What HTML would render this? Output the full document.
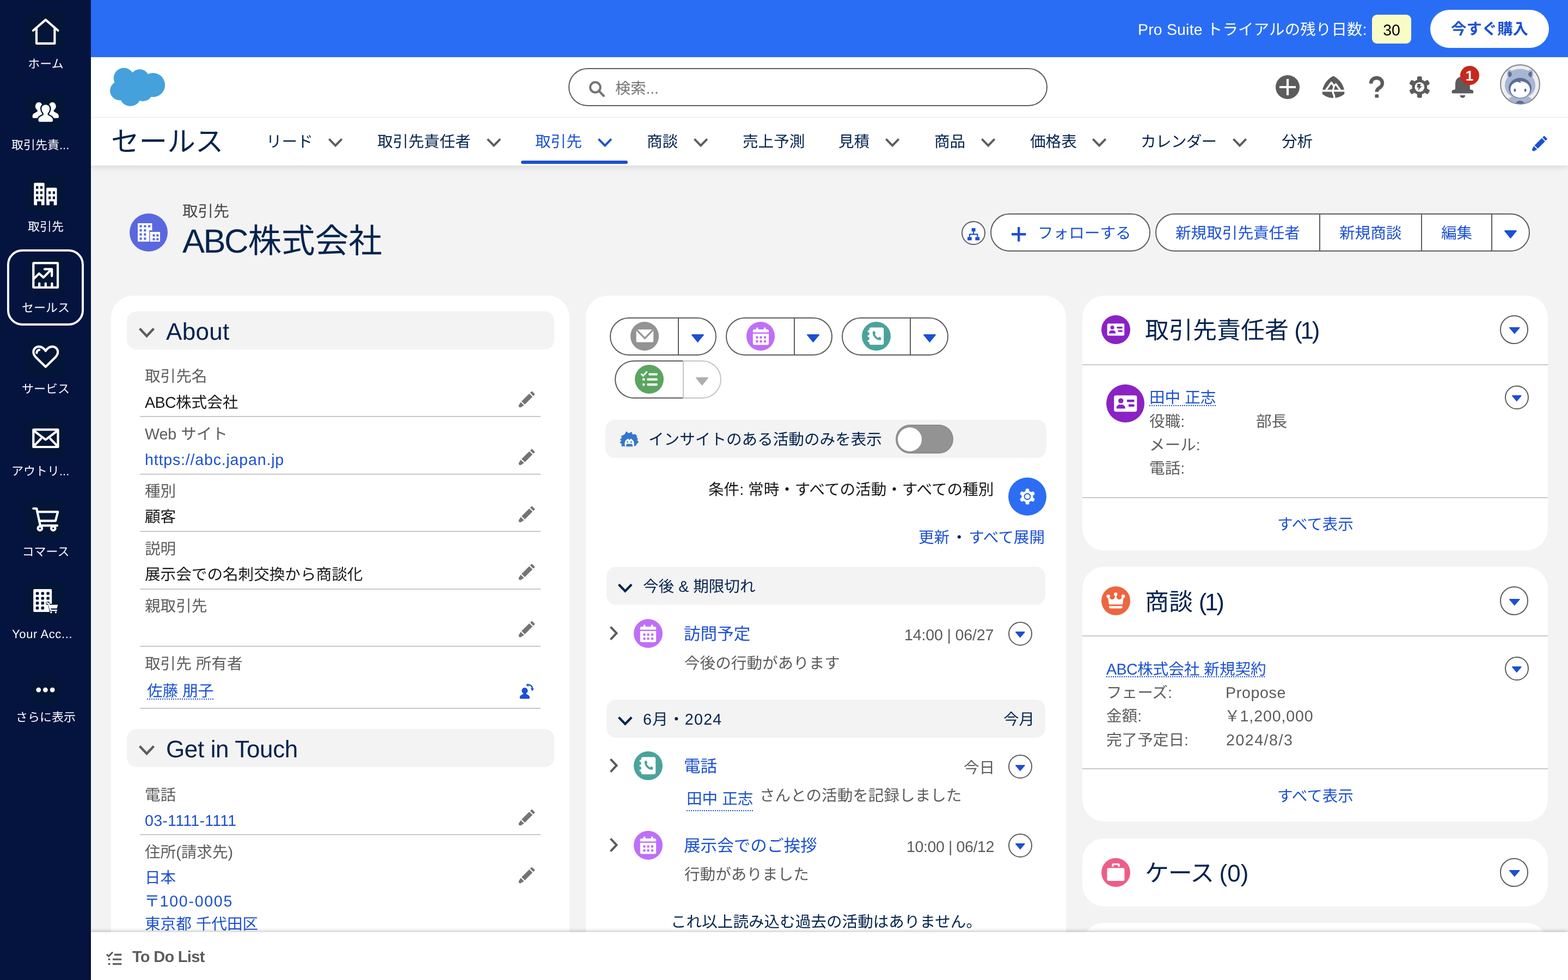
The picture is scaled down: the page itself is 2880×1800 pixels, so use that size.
<!DOCTYPE html>
<html lang="ja">
<head>
<meta charset="utf-8">
<title>ABC株式会社 | 取引先 | Salesforce</title>
<style>
*{margin:0;padding:0;box-sizing:content-box}
html,body{width:2880px;height:1800px;overflow:hidden;background:#f3f3f3}
body{position:relative;text-rendering:geometricPrecision;font-family:"Liberation Sans","Noto Sans CJK JP",sans-serif;color:#181818;-webkit-font-smoothing:antialiased}
.t,.b,.i{position:absolute;display:block}
.t{white-space:nowrap;text-decoration:none;will-change:transform}
.i{overflow:visible}
a{color:inherit;text-decoration:none}
h1,h2,h3,p,ul,li{margin:0;padding:0;font-weight:400;list-style:none}
@media (max-width:1800px){html{width:1440px;height:900px}body{transform:scale(.5);transform-origin:0 0}}
.lk{border-bottom:2.4px dotted #1c50d2}
</style>
</head>
<body>
<main>
<section class="page-header">
<div class="b" style="left:237.8px;top:391.8px;width:70.4px;height:70.4px;background:#5a68e0;border-radius:50%;"></div><svg class="i" style="left:237.8px;top:391.8px;" width="70.4" height="70.4" viewBox="0 0 70.4 70.4"><g fill="#fff"><rect x="15" y="18" width="26.4" height="33.8" rx="0.8"/><rect x="37.4" y="34" width="18.6" height="17.8" rx="0.8"/></g><rect x="36" y="32.6" width="7" height="20" fill="#5a68e0" opacity="0"/><path d="M41.4 30.2 V51.8 H37.2 V30.2 Z" fill="#fff"/><path d="M36.2 31 H41.8 V34 H37.6 V52 H36.2 Z" fill="#5a68e0"/><g fill="#5a68e0"><rect x="18.4" y="21.4" width="4.2" height="4.2" rx="1.2"/><rect x="26.2" y="21.4" width="4.2" height="4.2" rx="1.2"/><rect x="34" y="21.4" width="4.2" height="4.2" rx="1.2"/><rect x="18.4" y="29" width="4.2" height="4.2" rx="1.2"/><rect x="26.2" y="29" width="4.2" height="4.2" rx="1.2"/><rect x="18.4" y="36.6" width="4.2" height="4.2" rx="1.2"/><rect x="26.2" y="36.6" width="4.2" height="4.2" rx="1.2"/><rect x="18.4" y="44.2" width="4.2" height="4.2" rx="1.2"/><rect x="26.2" y="44.2" width="4.2" height="4.2" rx="1.2"/><rect x="42.4" y="38.2" width="4.2" height="4.2" rx="1.2"/><rect x="49.2" y="38.2" width="4.2" height="4.2" rx="1.2"/><rect x="42.4" y="45.2" width="4.2" height="4.2" rx="1.2"/><rect x="49.2" y="45.2" width="4.2" height="4.2" rx="1.2"/></g></svg>
<span class="t" style="left:335px;top:369.173px;font-size:28.6px;line-height:40px;color:#444444;">取引先</span>
<h1 class="t" style="left:335px;top:401.357px;font-size:61.6px;line-height:86px;color:#03234d;font-weight:400;"><span style="letter-spacing:-2.6px;margin-right:1.6px">ABC</span>株式会社</h1>
<div class="b" style="left:1765.8px;top:406.0px;width:44px;height:44px;background:#fff;border-radius:50%;border:2.2px solid #5c5c5c;box-sizing:border-box;"></div>
<svg class="i" style="left:1776.8px;top:418.8px;" width="22.2" height="22.4" viewBox="0 0 22.2 22.4"><g fill="#1c50d2"><rect x="7.6" y="0" width="7" height="6.2"/><rect x="0" y="16.4" width="7.8" height="6"/><rect x="14.4" y="16.4" width="7.8" height="6"/><path d="M10 6 H12.2 V10.2 H19.4 V16.6 H17.2 V12.4 H5 V16.6 H2.8 V10.2 H10 Z"/></g></svg>
<a class="b" style="left:1819.4px;top:392px;width:293.4px;height:70.2px;background:#fff;border-radius:36px;border:2.2px solid #5c5c5c;box-sizing:border-box;"></a>
<svg class="i" style="left:1858.4px;top:417.4px;" width="26.4" height="26.4" viewBox="0 0 26.4 26.4"><path d="M13.2 0 V26.4 M0 13.2 H26.4" stroke="#1c50d2" stroke-width="4.4" fill="none"/></svg>
<span class="t" style="left:1906.4px;top:409.373px;font-size:28.6px;line-height:40px;color:#1c50d2;">フォローする</span>
<div class="b" style="left:2122.3px;top:392px;width:687.4px;height:70.2px;background:#fff;border-radius:36px;border:2.2px solid #5c5c5c;box-sizing:border-box;"></div>
<div class="b" style="left:2422.6px;top:392px;width:2.2px;height:70.2px;background:#5c5c5c;"></div>
<div class="b" style="left:2610.1px;top:392px;width:2.2px;height:70.2px;background:#5c5c5c;"></div>
<div class="b" style="left:2738.9px;top:392px;width:2.2px;height:70.2px;background:#5c5c5c;"></div>
<a class="t" style="left:2159px;top:409.373px;font-size:28.6px;line-height:40px;color:#1c50d2;">新規取引先責任者</a>
<a class="t" style="left:2460px;top:409.373px;font-size:28.6px;line-height:40px;color:#1c50d2;">新規商談</a>
<a class="t" style="left:2647px;top:409.373px;font-size:28.6px;line-height:40px;color:#1c50d2;">編集</a>
<svg class="i" style="left:2761.1px;top:421.0px;" width="27" height="18.8" viewBox="0 0 27 18.8"><path d="M2.9 2.9 H24.1 L13.5 16 Z" fill="#1c50d2" stroke="#1c50d2" stroke-width="1.8" stroke-linejoin="round"/></svg>
</section>
<article class="card details">
<div class="b" style="left:204px;top:543px;width:842px;height:1300px;background:#fff;border-radius:40px;"></div>
<div class="b" style="left:233px;top:572px;width:785px;height:70px;background:#f3f3f3;border-radius:18px;"></div>
<svg class="i" style="left:252.10000000000002px;top:599.3px;" width="35" height="23.4" viewBox="0 0 35 23.4"><path d="M4.54 4.54 L17.5 18.2 L30.46 4.54" fill="none" stroke="#5c5c5c" stroke-width="4.4"/></svg>
<h2 class="t" style="left:305px;top:578.512px;font-size:44px;line-height:62px;color:#03234d;font-weight:400;letter-spacing:0.3px;">About</h2>
<div class="field">
<span class="t" style="left:266px;top:672.373px;font-size:28.6px;line-height:40px;color:#5c5c5c;">取引先名</span>
<span class="t" style="left:266px;top:719.773px;font-size:28.6px;line-height:40px;color:#181818;"><span style="letter-spacing:-0.6px">ABC</span>株式会社</span>
<svg class="i" style="left:951.4px;top:718.8000000000001px;" width="31" height="31" viewBox="0 0 30 30"><g fill="#747474" transform="rotate(45 15 15)"><rect x="10.9" y="-3.2" width="8.2" height="4.4" rx="1.3"/><rect x="10.9" y="3.2" width="8.2" height="19.4"/><path d="M10.9 24.6 H19.1 L17.4 31.8 L15 33 L12.6 31.8 Z"/></g></svg>
<div class="b" style="left:257px;top:763.5px;width:736px;height:2.2px;background:#c9c9c9;"></div>
</div>
<div class="field">
<span class="t" style="left:266px;top:777.973px;font-size:28.6px;line-height:40px;color:#5c5c5c;">Web サイト</span>
<a class="t" style="left:266px;top:825.373px;font-size:28.6px;line-height:40px;color:#1c50d2;"><span style="letter-spacing:0.8px">https://abc.japan.jp</span></a>
<svg class="i" style="left:951.4px;top:825.2px;" width="31" height="31" viewBox="0 0 30 30"><g fill="#747474" transform="rotate(45 15 15)"><rect x="10.9" y="-3.2" width="8.2" height="4.4" rx="1.3"/><rect x="10.9" y="3.2" width="8.2" height="19.4"/><path d="M10.9 24.6 H19.1 L17.4 31.8 L15 33 L12.6 31.8 Z"/></g></svg>
<div class="b" style="left:257px;top:869.9px;width:736px;height:2.2px;background:#c9c9c9;"></div>
</div>
<div class="field">
<span class="t" style="left:266px;top:883.373px;font-size:28.6px;line-height:40px;color:#5c5c5c;">種別</span>
<span class="t" style="left:266px;top:930.373px;font-size:28.6px;line-height:40px;color:#181818;">顧客</span>
<svg class="i" style="left:951.4px;top:930.4000000000001px;" width="31" height="31" viewBox="0 0 30 30"><g fill="#747474" transform="rotate(45 15 15)"><rect x="10.9" y="-3.2" width="8.2" height="4.4" rx="1.3"/><rect x="10.9" y="3.2" width="8.2" height="19.4"/><path d="M10.9 24.6 H19.1 L17.4 31.8 L15 33 L12.6 31.8 Z"/></g></svg>
<div class="b" style="left:257px;top:975.1px;width:736px;height:2.2px;background:#c9c9c9;"></div>
</div>
<div class="field">
<span class="t" style="left:266px;top:988.773px;font-size:28.6px;line-height:40px;color:#5c5c5c;">説明</span>
<span class="t" style="left:266px;top:1035.77px;font-size:28.6px;line-height:40px;color:#181818;">展示会での名刺交換から商談化</span>
<svg class="i" style="left:951.4px;top:1036.0px;" width="31" height="31" viewBox="0 0 30 30"><g fill="#747474" transform="rotate(45 15 15)"><rect x="10.9" y="-3.2" width="8.2" height="4.4" rx="1.3"/><rect x="10.9" y="3.2" width="8.2" height="19.4"/><path d="M10.9 24.6 H19.1 L17.4 31.8 L15 33 L12.6 31.8 Z"/></g></svg>
<div class="b" style="left:257px;top:1080.7px;width:736px;height:2.2px;background:#c9c9c9;"></div>
</div>
<div class="field">
<span class="t" style="left:266px;top:1094.17px;font-size:28.6px;line-height:40px;color:#5c5c5c;">親取引先</span>
<svg class="i" style="left:951.4px;top:1141.2px;" width="31" height="31" viewBox="0 0 30 30"><g fill="#747474" transform="rotate(45 15 15)"><rect x="10.9" y="-3.2" width="8.2" height="4.4" rx="1.3"/><rect x="10.9" y="3.2" width="8.2" height="19.4"/><path d="M10.9 24.6 H19.1 L17.4 31.8 L15 33 L12.6 31.8 Z"/></g></svg>
<div class="b" style="left:257px;top:1185.9px;width:736px;height:2.2px;background:#c9c9c9;"></div>
</div>
<div class="field">
<span class="t" style="left:266px;top:1199.77px;font-size:28.6px;line-height:40px;color:#5c5c5c;">取引先 所有者</span>
<a class="t" style="left:270px;top:1250.37px;font-size:28.6px;line-height:40px;color:#1c50d2;text-decoration:underline dotted #1c50d2;text-decoration-thickness:2.2px;text-underline-offset:4.4px;">佐藤 朋子</a>
<div class="b" style="left:257px;top:1299.9px;width:736px;height:2.2px;background:#c9c9c9;"></div>
</div>
<svg class="i" style="left:953.6px;top:1254.6px;" width="28" height="29" viewBox="0 0 28 29"><g fill="#1c50d2"><circle cx="9.8" cy="13.6" r="5.6"/><path d="M0.6 26.4 C0.6 22.6 3.4 21.4 6 20.2 C7 19.8 7.4 19 7 18 H12.6 C12.2 19 12.6 19.8 13.6 20.2 C16.2 21.4 19 22.6 19 26.4 C19 27.6 18.2 28.4 17 28.4 H2.6 C1.4 28.4 0.6 27.6 0.6 26.4 Z"/></g><path d="M14.6 3.4 C19 2 23.2 4.6 24 9.6" fill="none" stroke="#1c50d2" stroke-width="2.4"/><path d="M11.8 3 L16.6 0.2 L16.4 6.2 Z M20.6 9 L27 9.4 L23.4 14.4 Z" fill="#1c50d2"/></svg>
<div class="b" style="left:233px;top:1339px;width:785px;height:70px;background:#f3f3f3;border-radius:18px;"></div>
<svg class="i" style="left:252.10000000000002px;top:1366.3px;" width="35" height="23.4" viewBox="0 0 35 23.4"><path d="M4.54 4.54 L17.5 18.2 L30.46 4.54" fill="none" stroke="#5c5c5c" stroke-width="4.4"/></svg>
<h2 class="t" style="left:305px;top:1345.51px;font-size:44px;line-height:62px;color:#03234d;font-weight:400;letter-spacing:-0.36px;">Get in Touch</h2>
<div class="field">
<span class="t" style="left:266px;top:1440.97px;font-size:28.6px;line-height:40px;color:#5c5c5c;">電話</span>
<a class="t" style="left:266px;top:1487.57px;font-size:28.6px;line-height:40px;color:#1c50d2;"><span style="letter-spacing:0.26px">03-1111-1111</span></a>
<svg class="i" style="left:951.4px;top:1487.2px;" width="31" height="31" viewBox="0 0 30 30"><g fill="#747474" transform="rotate(45 15 15)"><rect x="10.9" y="-3.2" width="8.2" height="4.4" rx="1.3"/><rect x="10.9" y="3.2" width="8.2" height="19.4"/><path d="M10.9 24.6 H19.1 L17.4 31.8 L15 33 L12.6 31.8 Z"/></g></svg>
<div class="b" style="left:257px;top:1531.9px;width:736px;height:2.2px;background:#c9c9c9;"></div>
</div>
<div class="field">
<span class="t" style="left:266px;top:1545.97px;font-size:28.6px;line-height:40px;color:#5c5c5c;">住所(請求先)</span>
<a class="t" style="left:266px;top:1593.37px;font-size:28.6px;line-height:40px;color:#1c50d2;">日本</a>
<a class="t" style="left:265px;top:1636.37px;font-size:28.6px;line-height:40px;color:#1c50d2;">〒<span style="letter-spacing:1.7px">100-0005</span></a>
<a class="t" style="left:266px;top:1678.37px;font-size:28.6px;line-height:40px;color:#1c50d2;">東京都 千代田区</a>
<svg class="i" style="left:951.4px;top:1592.8px;" width="31" height="31" viewBox="0 0 30 30"><g fill="#747474" transform="rotate(45 15 15)"><rect x="10.9" y="-3.2" width="8.2" height="4.4" rx="1.3"/><rect x="10.9" y="3.2" width="8.2" height="19.4"/><path d="M10.9 24.6 H19.1 L17.4 31.8 L15 33 L12.6 31.8 Z"/></g></svg>
</div>
</article>
<article class="card activity">
<div class="b" style="left:1076px;top:543px;width:882px;height:1300px;background:#fff;border-radius:40px;"></div>
<div class="b" style="left:1120px;top:583px;width:196px;height:70.2px;background:#fff;border-radius:36px;border:2.2px solid #5c5c5c;box-sizing:border-box;"></div>
<div class="b" style="left:1245.0px;top:583px;width:2.2px;height:70.2px;background:#5c5c5c;"></div>
<div class="b" style="left:1157.6px;top:591.2px;width:52.8px;height:52.8px;background:#939393;border-radius:50%;"></div><svg class="i" style="left:1157.6px;top:591.2px;" width="52.8" height="52.8" viewBox="0 0 52.8 52.8"><rect x="10.6" y="14.2" width="31.6" height="23.4" rx="2.6" fill="#fff"/><path d="M11 14.6 L26.4 30.4 L41.8 14.6" fill="none" stroke="#939393" stroke-width="3.2"/></svg>
<svg class="i" style="left:1267.55px;top:612.0px;" width="27" height="18.8" viewBox="0 0 27 18.8"><path d="M2.9 2.9 H24.1 L13.5 16 Z" fill="#1c50d2" stroke="#1c50d2" stroke-width="1.8" stroke-linejoin="round"/></svg>
<div class="b" style="left:1333px;top:583px;width:196px;height:70.2px;background:#fff;border-radius:36px;border:2.2px solid #5c5c5c;box-sizing:border-box;"></div>
<div class="b" style="left:1457.7px;top:583px;width:2.2px;height:70.2px;background:#5c5c5c;"></div>
<div class="b" style="left:1370.6px;top:591.2px;width:52.8px;height:52.8px;background:#bf6ff7;border-radius:50%;"></div><svg class="i" style="left:1370.6px;top:591.2px;" width="52.8" height="52.8" viewBox="0 0 52.8 52.8"><g fill="#fff"><path d="M11.8 16.6 C11.8 15 12.8 14 14.4 14 H38.5 C40.1 14 41.1 15 41.1 16.6 V19.6 H11.8 Z"/><rect x="17.8" y="10.5" width="3.8" height="6" rx="1.6"/><rect x="31.8" y="10.5" width="3.8" height="6" rx="1.6"/><path d="M11.8 21.9 H41.1 V39.8 C41.1 41.4 40.1 42.4 38.5 42.4 H14.4 C12.8 42.4 11.8 41.4 11.8 39.8 Z"/></g><g fill="#bf6ff7"><rect x="17.3" y="26.5" width="4.3" height="4.3" rx="1"/><rect x="24.4" y="26.5" width="4.3" height="4.3" rx="1"/><rect x="31.8" y="26.5" width="4.3" height="4.3" rx="1"/><rect x="17.3" y="34" width="4.3" height="4.3" rx="1"/><rect x="24.4" y="34" width="4.3" height="4.3" rx="1"/><rect x="31.8" y="34" width="4.3" height="4.3" rx="1"/></g></svg>
<svg class="i" style="left:1480.4px;top:612.0px;" width="27" height="18.8" viewBox="0 0 27 18.8"><path d="M2.9 2.9 H24.1 L13.5 16 Z" fill="#1c50d2" stroke="#1c50d2" stroke-width="1.8" stroke-linejoin="round"/></svg>
<div class="b" style="left:1546.2px;top:583px;width:196px;height:70.2px;background:#fff;border-radius:36px;border:2.2px solid #5c5c5c;box-sizing:border-box;"></div>
<div class="b" style="left:1670.7px;top:583px;width:2.2px;height:70.2px;background:#5c5c5c;"></div>
<div class="b" style="left:1582.8px;top:591.2px;width:52.8px;height:52.8px;background:#4aa39a;border-radius:50%;"></div><svg class="i" style="left:1582.8px;top:591.2px;" width="52.8" height="52.8" viewBox="0 0 52.8 52.8"><rect x="13.6" y="10.6" width="26.6" height="31.6" rx="3.4" fill="#fff"/><g fill="#fff"><rect x="10.6" y="15.8" width="5" height="3.6" rx="1.4"/><rect x="10.6" y="24.6" width="5" height="3.6" rx="1.4"/><rect x="10.6" y="33.4" width="5" height="3.6" rx="1.4"/></g><path d="M21.8 19 C21.4 22.2 22.6 25.4 25.2 28.2 C27.6 30.8 30.4 32 33.4 31.8" fill="none" stroke="#4aa39a" stroke-width="3.7" stroke-linecap="round"/><path d="M19.8 19 L23.2 17 L25.4 21.2 L22.6 23 Z M30.2 29.2 L32.8 27.4 L35.8 30.6 L33.8 33.4 Z" fill="#4aa39a"/></svg>
<svg class="i" style="left:1693.5px;top:612.0px;" width="27" height="18.8" viewBox="0 0 27 18.8"><path d="M2.9 2.9 H24.1 L13.5 16 Z" fill="#1c50d2" stroke="#1c50d2" stroke-width="1.8" stroke-linejoin="round"/></svg>
<div class="b" style="left:1129.2px;top:662px;width:125.19999999999996px;height:70.2px;background:#fff;border-radius:36px 0 0 36px;border:2.2px solid #5c5c5c;box-sizing:border-box;border-right:none;"></div>
<div class="b" style="left:1253.9px;top:662px;width:70.89999999999995px;height:70.2px;background:#fff;border-radius:0 36px 36px 0;border:2.2px solid #c4c4c4;box-sizing:border-box;"></div>
<div class="b" style="left:1166.0px;top:670.2px;width:52.8px;height:52.8px;background:#5aa55f;border-radius:50%;"></div><svg class="i" style="left:1166.0px;top:670.2px;" width="52.8" height="52.8" viewBox="0 0 52.8 52.8"><g fill="#fff"><rect x="25.4" y="15.4" width="16.2" height="4.2" rx="0.8"/><rect x="22.6" y="24.8" width="19" height="4.2" rx="0.8"/><rect x="22.6" y="34.2" width="19" height="4.2" rx="0.8"/><rect x="14" y="24.8" width="4.4" height="4.2" rx="0.8"/><rect x="14" y="34.2" width="4.4" height="4.2" rx="0.8"/></g><path d="M11.4 16.6 L15.4 20.2 L22.6 12.2" fill="none" stroke="#fff" stroke-width="2.9"/></svg>
<svg class="i" style="left:1276.3999999999999px;top:691.0px;" width="27" height="18.8" viewBox="0 0 27 18.8"><path d="M2.9 2.9 H24.1 L13.5 16 Z" fill="#aeaeae" stroke="#aeaeae" stroke-width="1.8" stroke-linejoin="round"/></svg>
<div class="b" style="left:1111.7px;top:771.3px;width:810.3px;height:69.4px;background:#f3f3f3;border-radius:17.6px;"></div>
<svg class="i" style="left:1138.8px;top:792.8px;" width="33.6" height="27.6" viewBox="0 0 33.6 27.6"><path d="M6.3 26.1 L3 25.8 L3.6 22.6 L0 19.5 L3 17.5 L0.7 13.9 L3.6 11.6 L2.6 8 L6.9 6.3 L8.9 5 L11.6 0 L15.5 3.6 L20.8 1 L22.5 5.6 L27.4 5 L30.4 7.9 L29.8 10.9 L32.1 12.9 L30.4 15.5 L33.4 18.8 L30.1 22.1 L28.8 24.8 L24.8 25.8 L23.5 26.8 H10.9 L8.9 26.1 Z" fill="#3277cf" stroke="#3277cf" stroke-width="1.2" stroke-linejoin="round"/><path d="M9.4 27.2 C6.4 19.4 10.4 12.4 17 12.4 C23.6 12.4 27.6 19.4 24.8 27.2 Z" fill="#fff"/><path d="M14.4 12.6 L19.6 12 L17.4 15.4 Z" fill="#3277cf"/><g fill="#3277cf"><ellipse cx="13.4" cy="19" rx="1.25" ry="1.7"/><ellipse cx="20.3" cy="19" rx="1.25" ry="1.7"/><path d="M10.9 25.6 C10.9 23.4 12.6 22.1 15 22.4 L17 22.1 L19 22.4 C21.4 22.1 23.1 23.4 23.1 25.6 L22.8 26.8 H11.2 Z"/></g></svg>
<span class="t" style="left:1191.4px;top:787.573px;font-size:28.6px;line-height:40px;color:#03234d;">インサイトのある活動のみを表示</span>
<div class="b" style="left:1645.4px;top:780.2px;width:105.6px;height:52.8px;background:#939393;border-radius:27px;border:2.2px solid #8a8a8a;box-sizing:border-box;"></div>
<div class="b" style="left:1649.2px;top:784.6px;width:44px;height:44px;background:#fff;border-radius:50%;"></div>
<span class="t" style="right:1054.4px;top:879.973px;font-size:28.6px;line-height:40px;color:#181818;">条件: 常時・すべての活動・すべての種別</span>
<div class="b" style="left:1852.0px;top:876.5999999999999px;width:70.4px;height:70.4px;background:#2c6df4;border-radius:50%;"></div>
<svg class="i" style="left:1872.3px;top:897.2px;" width="30" height="30" viewBox="0 0 30 30"><g transform="translate(15 15)"><g fill="#fff"><circle r="10.6"/><rect x="-3.4" y="-14.5" width="6.8" height="7" rx="2.6" transform="rotate(0)"/><rect x="-3.4" y="-14.5" width="6.8" height="7" rx="2.6" transform="rotate(60)"/><rect x="-3.4" y="-14.5" width="6.8" height="7" rx="2.6" transform="rotate(120)"/><rect x="-3.4" y="-14.5" width="6.8" height="7" rx="2.6" transform="rotate(180)"/><rect x="-3.4" y="-14.5" width="6.8" height="7" rx="2.6" transform="rotate(240)"/><rect x="-3.4" y="-14.5" width="6.8" height="7" rx="2.6" transform="rotate(300)"/></g><circle r="5.4" fill="none" stroke="#2c6df4" stroke-width="2.1"/></g></svg>
<div class="t" style="right:960.5999999999999px;top:967.773px;font-size:28.6px;line-height:40px;color:#1c50d2;"><a style="color:#1c50d2">更新</a><span style="color:#03234d;margin:0 3.2px">・</span><a style="color:#1c50d2">すべて展開</a></div>
<div class="b" style="left:1114.3px;top:1041px;width:805.6px;height:69.8px;background:#f3f3f3;border-radius:17.6px;"></div>
<svg class="i" style="left:1132.3px;top:1068.5px;" width="32.6" height="21.8" viewBox="0 0 32.6 21.8"><path d="M4.47 4.47 L16.3 16.7 L28.13 4.47" fill="none" stroke="#03234d" stroke-width="4.2"/></svg>
<h3 class="t" style="left:1181px;top:1058.37px;font-size:28.6px;line-height:40px;color:#03234d;font-weight:400;">今後 &amp; 期限切れ</h3>
<ul class="timeline">
<li class="tl-item">
<svg class="i" style="left:1117.35px;top:1147.1999999999998px;" width="20.5" height="32" viewBox="0 0 20.5 32"><path d="M4.4 4.4 L15.5 16 L4.4 27.6" fill="none" stroke="#5c5c5c" stroke-width="4"/></svg>
<div class="b" style="left:1163.8px;top:1137.1999999999998px;width:52.8px;height:52.8px;background:#bf6ff7;border-radius:50%;"></div><svg class="i" style="left:1163.8px;top:1137.1999999999998px;" width="52.8" height="52.8" viewBox="0 0 52.8 52.8"><g fill="#fff"><path d="M11.8 16.6 C11.8 15 12.8 14 14.4 14 H38.5 C40.1 14 41.1 15 41.1 16.6 V19.6 H11.8 Z"/><rect x="17.8" y="10.5" width="3.8" height="6" rx="1.6"/><rect x="31.8" y="10.5" width="3.8" height="6" rx="1.6"/><path d="M11.8 21.9 H41.1 V39.8 C41.1 41.4 40.1 42.4 38.5 42.4 H14.4 C12.8 42.4 11.8 41.4 11.8 39.8 Z"/></g><g fill="#bf6ff7"><rect x="17.3" y="26.5" width="4.3" height="4.3" rx="1"/><rect x="24.4" y="26.5" width="4.3" height="4.3" rx="1"/><rect x="31.8" y="26.5" width="4.3" height="4.3" rx="1"/><rect x="17.3" y="34" width="4.3" height="4.3" rx="1"/><rect x="24.4" y="34" width="4.3" height="4.3" rx="1"/><rect x="31.8" y="34" width="4.3" height="4.3" rx="1"/></g></svg>
<a class="t" style="left:1256px;top:1143.47px;font-size:30.6px;line-height:44px;color:#1c50d2;">訪問予定</a>
<span class="t" style="right:1054.4px;top:1147.17px;font-size:28.6px;line-height:40px;color:#5c5c5c;letter-spacing:-0.16px;">14:00 | 06/27</span>
<div class="b" style="left:1852.0px;top:1142.1999999999998px;width:44px;height:44px;background:#fff;border-radius:50%;border:2.2px solid #5c5c5c;box-sizing:border-box;"></div><svg class="i" style="left:1863.2px;top:1158.2999999999997px;" width="21.6" height="15" viewBox="0 0 21.6 15"><path d="M2.9 2.9 H18.7 L10.8 12.2 Z" fill="#1c50d2" stroke="#1c50d2" stroke-width="1.8" stroke-linejoin="round"/></svg>
<span class="t" style="left:1256.6px;top:1198.57px;font-size:28.6px;line-height:40px;color:#5c5c5c;">今後の行動があります</span>
</li>
</ul>
<div class="b" style="left:1114.3px;top:1284.8px;width:805.6px;height:69.8px;background:#f3f3f3;border-radius:17.6px;"></div>
<svg class="i" style="left:1132.3px;top:1312.5px;" width="32.6" height="21.8" viewBox="0 0 32.6 21.8"><path d="M4.47 4.47 L16.3 16.7 L28.13 4.47" fill="none" stroke="#03234d" stroke-width="4.2"/></svg>
<h3 class="t" style="left:1181px;top:1302.37px;font-size:28.6px;line-height:40px;color:#03234d;font-weight:400;letter-spacing:1.25px;">6月・2024</h3>
<span class="t" style="right:979.4000000000001px;top:1302.37px;font-size:28.6px;line-height:40px;color:#03234d;">今月</span>
<ul class="timeline">
<li class="tl-item">
<svg class="i" style="left:1117.35px;top:1390.1999999999998px;" width="20.5" height="32" viewBox="0 0 20.5 32"><path d="M4.4 4.4 L15.5 16 L4.4 27.6" fill="none" stroke="#5c5c5c" stroke-width="4"/></svg>
<div class="b" style="left:1163.8px;top:1380.1999999999998px;width:52.8px;height:52.8px;background:#4aa39a;border-radius:50%;"></div><svg class="i" style="left:1163.8px;top:1380.1999999999998px;" width="52.8" height="52.8" viewBox="0 0 52.8 52.8"><rect x="13.6" y="10.6" width="26.6" height="31.6" rx="3.4" fill="#fff"/><g fill="#fff"><rect x="10.6" y="15.8" width="5" height="3.6" rx="1.4"/><rect x="10.6" y="24.6" width="5" height="3.6" rx="1.4"/><rect x="10.6" y="33.4" width="5" height="3.6" rx="1.4"/></g><path d="M21.8 19 C21.4 22.2 22.6 25.4 25.2 28.2 C27.6 30.8 30.4 32 33.4 31.8" fill="none" stroke="#4aa39a" stroke-width="3.7" stroke-linecap="round"/><path d="M19.8 19 L23.2 17 L25.4 21.2 L22.6 23 Z M30.2 29.2 L32.8 27.4 L35.8 30.6 L33.8 33.4 Z" fill="#4aa39a"/></svg>
<a class="t" style="left:1256px;top:1386.47px;font-size:30.6px;line-height:44px;color:#1c50d2;">電話</a>
<span class="t" style="right:1053px;top:1391.37px;font-size:28.6px;line-height:40px;color:#5c5c5c;">今日</span>
<div class="b" style="left:1852.0px;top:1386.3999999999999px;width:44px;height:44px;background:#fff;border-radius:50%;border:2.2px solid #5c5c5c;box-sizing:border-box;"></div><svg class="i" style="left:1863.2px;top:1402.4999999999998px;" width="21.6" height="15" viewBox="0 0 21.6 15"><path d="M2.9 2.9 H18.7 L10.8 12.2 Z" fill="#1c50d2" stroke="#1c50d2" stroke-width="1.8" stroke-linejoin="round"/></svg>
<a class="t" style="left:1261px;top:1447.57px;font-size:28.6px;line-height:40px;color:#1c50d2;text-decoration:underline dotted #1c50d2;text-decoration-thickness:2.2px;text-underline-offset:4.4px;text-underline-offset:10.6px;">田中 正志</a>
<span class="t" style="left:1395.4px;top:1441.57px;font-size:28.6px;line-height:40px;color:#5c5c5c;">さんとの活動を記録しました</span>
</li>
<li class="tl-item">
<svg class="i" style="left:1117.35px;top:1536.0px;" width="20.5" height="32" viewBox="0 0 20.5 32"><path d="M4.4 4.4 L15.5 16 L4.4 27.6" fill="none" stroke="#5c5c5c" stroke-width="4"/></svg>
<div class="b" style="left:1163.8px;top:1526.0px;width:52.8px;height:52.8px;background:#bf6ff7;border-radius:50%;"></div><svg class="i" style="left:1163.8px;top:1526.0px;" width="52.8" height="52.8" viewBox="0 0 52.8 52.8"><g fill="#fff"><path d="M11.8 16.6 C11.8 15 12.8 14 14.4 14 H38.5 C40.1 14 41.1 15 41.1 16.6 V19.6 H11.8 Z"/><rect x="17.8" y="10.5" width="3.8" height="6" rx="1.6"/><rect x="31.8" y="10.5" width="3.8" height="6" rx="1.6"/><path d="M11.8 21.9 H41.1 V39.8 C41.1 41.4 40.1 42.4 38.5 42.4 H14.4 C12.8 42.4 11.8 41.4 11.8 39.8 Z"/></g><g fill="#bf6ff7"><rect x="17.3" y="26.5" width="4.3" height="4.3" rx="1"/><rect x="24.4" y="26.5" width="4.3" height="4.3" rx="1"/><rect x="31.8" y="26.5" width="4.3" height="4.3" rx="1"/><rect x="17.3" y="34" width="4.3" height="4.3" rx="1"/><rect x="24.4" y="34" width="4.3" height="4.3" rx="1"/><rect x="31.8" y="34" width="4.3" height="4.3" rx="1"/></g></svg>
<a class="t" style="left:1256px;top:1532.27px;font-size:30.6px;line-height:44px;color:#1c50d2;">展示会でのご挨拶</a>
<span class="t" style="right:1054.4px;top:1535.97px;font-size:28.6px;line-height:40px;color:#5c5c5c;letter-spacing:-0.42px;">10:00 | 06/12</span>
<div class="b" style="left:1852.0px;top:1531.0px;width:44px;height:44px;background:#fff;border-radius:50%;border:2.2px solid #5c5c5c;box-sizing:border-box;"></div><svg class="i" style="left:1863.2px;top:1547.1px;" width="21.6" height="15" viewBox="0 0 21.6 15"><path d="M2.9 2.9 H18.7 L10.8 12.2 Z" fill="#1c50d2" stroke="#1c50d2" stroke-width="1.8" stroke-linejoin="round"/></svg>
<span class="t" style="left:1256.6px;top:1587.37px;font-size:28.6px;line-height:40px;color:#5c5c5c;">行動がありました</span>
</li>
</ul>
<p class="t" style="left:1231.8px;top:1673.77px;font-size:28.6px;line-height:40px;color:#03234d;">これ以上読み込む過去の活動はありません。</p>
</article>
<aside class="related">
<article class="card">
<div class="b" style="left:1988.2px;top:543px;width:854.6000000000001px;height:468px;background:#fff;border-radius:40px;"></div>
<div class="b" style="left:2022.7999999999997px;top:579.0px;width:52.8px;height:52.8px;background:#8a22c4;border-radius:50%;"></div><svg class="i" style="left:2022.7999999999997px;top:579.0px;" width="52.8" height="52.8" viewBox="0 0 52.8 52.8"><rect x="10.6" y="15.2" width="31.6" height="22.4" rx="2.6" fill="#fff"/><g fill="#8a22c4"><circle cx="20" cy="22.6" r="3.5"/><path d="M14 32.6 C14 29.4 16.4 28.4 18.4 27.6 C19.4 28.2 20.6 28.2 21.6 27.6 C23.6 28.4 26 29.4 26 32.6 V33.4 H14 Z"/><rect x="28.4" y="21" width="10.2" height="3.4" rx="0.8"/><rect x="30.6" y="27.4" width="8" height="3.4" rx="0.8"/></g></svg>
<h2 class="t" style="left:2103px;top:577.112px;font-size:44px;line-height:62px;color:#03234d;font-weight:400;">取引先責任者<span style="letter-spacing:-3.4px;margin-left:1.5px"> (1)</span></h2>
<div class="b" style="left:2754.6px;top:579.0px;width:52.8px;height:52.8px;background:#fff;border-radius:50%;border:2.2px solid #5c5c5c;box-sizing:border-box;"></div><svg class="i" style="left:2769.6px;top:599.1999999999999px;" width="23.6" height="16" viewBox="0 0 23.6 16"><path d="M2.9 2.9 H20.7 L11.8 13.2 Z" fill="#1c50d2" stroke="#1c50d2" stroke-width="1.8" stroke-linejoin="round"/></svg>
<div class="b" style="left:1988.2px;top:668.9px;width:854.6000000000001px;height:2.2px;background:#c9c9c9;"></div>
<div class="b" style="left:2031.6000000000001px;top:705.5999999999999px;width:70.4px;height:70.4px;background:#8a22c4;border-radius:50%;"></div><svg class="i" style="left:2031.6000000000001px;top:705.5999999999999px;" width="70.4" height="70.4" viewBox="0 0 52.8 52.8"><rect x="10.6" y="15.2" width="31.6" height="22.4" rx="2.6" fill="#fff"/><g fill="#8a22c4"><circle cx="20" cy="22.6" r="3.5"/><path d="M14 32.6 C14 29.4 16.4 28.4 18.4 27.6 C19.4 28.2 20.6 28.2 21.6 27.6 C23.6 28.4 26 29.4 26 32.6 V33.4 H14 Z"/><rect x="28.4" y="21" width="10.2" height="3.4" rx="0.8"/><rect x="30.6" y="27.4" width="8" height="3.4" rx="0.8"/></g></svg>
<a class="t" style="left:2111.4px;top:711.173px;font-size:28.6px;line-height:40px;color:#1c50d2;text-decoration:underline dotted #1c50d2;text-decoration-thickness:2.2px;text-underline-offset:4.4px;">田中 正志</a>
<span class="t" style="left:2111.4px;top:754.973px;font-size:28.6px;line-height:40px;color:#5c5c5c;">役職:</span>
<span class="t" style="left:2307px;top:754.973px;font-size:28.6px;line-height:40px;color:#5c5c5c;">部長</span>
<span class="t" style="left:2111.4px;top:798.373px;font-size:28.6px;line-height:40px;color:#5c5c5c;">メール:</span>
<span class="t" style="left:2111.4px;top:840.773px;font-size:28.6px;line-height:40px;color:#5c5c5c;">電話:</span>
<div class="b" style="left:2763.6px;top:707.8px;width:44px;height:44px;background:#fff;border-radius:50%;border:2.2px solid #5c5c5c;box-sizing:border-box;"></div><svg class="i" style="left:2774.7999999999997px;top:723.9px;" width="21.6" height="15" viewBox="0 0 21.6 15"><path d="M2.9 2.9 H18.7 L10.8 12.2 Z" fill="#1c50d2" stroke="#1c50d2" stroke-width="1.8" stroke-linejoin="round"/></svg>
<div class="b" style="left:1988.2px;top:912.9px;width:854.6000000000001px;height:2.2px;background:#c9c9c9;"></div>
<a class="t" style="left:2416px;transform:translateX(-50%);top:944.373px;font-size:28.6px;line-height:40px;color:#1c50d2;">すべて表示</a>
</article>
<article class="card">
<div class="b" style="left:1988.2px;top:1040.8px;width:854.6000000000001px;height:468px;background:#fff;border-radius:40px;"></div>
<div class="b" style="left:2022.7999999999997px;top:1077.3999999999999px;width:52.8px;height:52.8px;background:#ec6640;border-radius:50%;"></div><svg class="i" style="left:2022.7999999999997px;top:1077.3999999999999px;" width="52.8" height="52.8" viewBox="0 0 52.8 52.8"><g fill="#fff"><path d="M13.9 33.3 L12 20.4 L14.5 18.8 A5.2 5.2 0 0 0 24.9 18.8 L25 16.4 L27.4 16.4 L27.5 18.8 A5.2 5.2 0 0 0 37.9 18.8 L40.6 20.4 L39 33.3 Z"/><circle cx="12.6" cy="18.2" r="3.2"/><circle cx="26.2" cy="14.4" r="3.2"/><circle cx="40" cy="18.2" r="3.2"/><path d="M14.1 36.2 H38.5 V37.8 C38.5 39.6 37.4 40.6 35.7 40.6 H16.9 C15.2 40.6 14.1 39.6 14.1 37.8 Z"/></g></svg>
<h2 class="t" style="left:2103px;top:1075.51px;font-size:44px;line-height:62px;color:#03234d;font-weight:400;">商談<span style="letter-spacing:-3.4px;margin-left:2px"> (1)</span></h2>
<div class="b" style="left:2754.6px;top:1077.3999999999999px;width:52.8px;height:52.8px;background:#fff;border-radius:50%;border:2.2px solid #5c5c5c;box-sizing:border-box;"></div><svg class="i" style="left:2769.6px;top:1097.6px;" width="23.6" height="16" viewBox="0 0 23.6 16"><path d="M2.9 2.9 H20.7 L11.8 13.2 Z" fill="#1c50d2" stroke="#1c50d2" stroke-width="1.8" stroke-linejoin="round"/></svg>
<div class="b" style="left:1988.2px;top:1166.9px;width:854.6000000000001px;height:2.2px;background:#c9c9c9;"></div>
<a class="t" style="left:2032px;top:1209.77px;font-size:28.6px;line-height:40px;color:#1c50d2;text-decoration:underline dotted #1c50d2;text-decoration-thickness:2.2px;text-underline-offset:4.4px;text-underline-offset:3.4px;"><span style="letter-spacing:-0.6px">ABC</span>株式会社 新規契約</a>
<span class="t" style="left:2032px;top:1253.37px;font-size:28.6px;line-height:40px;color:#5c5c5c;">フェーズ:</span>
<span class="t" style="left:2251.4px;top:1253.37px;font-size:28.6px;line-height:40px;color:#5c5c5c;letter-spacing:0.66px;">Propose</span>
<span class="t" style="left:2032px;top:1296.37px;font-size:28.6px;line-height:40px;color:#5c5c5c;">金額:</span>
<span class="t" style="left:2249.4px;top:1296.37px;font-size:28.6px;line-height:40px;color:#5c5c5c;">￥<span style="letter-spacing:0.85px">1,200,000</span></span>
<span class="t" style="left:2032px;top:1339.77px;font-size:28.6px;line-height:40px;color:#5c5c5c;">完了予定日:</span>
<span class="t" style="left:2251.8px;top:1339.77px;font-size:28.6px;line-height:40px;color:#5c5c5c;letter-spacing:1.5px;">2024/8/3</span>
<div class="b" style="left:2763.6px;top:1205.6px;width:44px;height:44px;background:#fff;border-radius:50%;border:2.2px solid #5c5c5c;box-sizing:border-box;"></div><svg class="i" style="left:2774.7999999999997px;top:1221.6999999999998px;" width="21.6" height="15" viewBox="0 0 21.6 15"><path d="M2.9 2.9 H18.7 L10.8 12.2 Z" fill="#1c50d2" stroke="#1c50d2" stroke-width="1.8" stroke-linejoin="round"/></svg>
<div class="b" style="left:1988.2px;top:1410.9px;width:854.6000000000001px;height:2.2px;background:#c9c9c9;"></div>
<a class="t" style="left:2416px;transform:translateX(-50%);top:1442.77px;font-size:28.6px;line-height:40px;color:#1c50d2;">すべて表示</a>
</article>
<article class="card">
<div class="b" style="left:1988.2px;top:1540px;width:854.6000000000001px;height:125px;background:#fff;border-radius:40px;"></div>
<div class="b" style="left:2022.7999999999997px;top:1576.0px;width:52.8px;height:52.8px;background:#ed5e87;border-radius:50%;"></div><svg class="i" style="left:2022.7999999999997px;top:1576.0px;" width="52.8" height="52.8" viewBox="0 0 52.8 52.8"><rect x="10.5" y="18.3" width="31.9" height="23.8" rx="2.8" fill="#fff"/><path d="M20.8 15.7 V13 C20.8 12 21.5 11.4 22.4 11.4 H30.5 C31.4 11.4 32.1 12 32.1 13 V15.7" fill="none" stroke="#fff" stroke-width="3.2"/></svg>
<h2 class="t" style="left:2103px;top:1574.11px;font-size:44px;line-height:62px;color:#03234d;font-weight:400;"><span style="letter-spacing:-1.3px">ケース</span><span style="margin-left:-1.6px"> (0)</span></h2>
<div class="b" style="left:2754.6px;top:1576.0px;width:52.8px;height:52.8px;background:#fff;border-radius:50%;border:2.2px solid #5c5c5c;box-sizing:border-box;"></div><svg class="i" style="left:2769.6px;top:1596.2px;" width="23.6" height="16" viewBox="0 0 23.6 16"><path d="M2.9 2.9 H20.7 L11.8 13.2 Z" fill="#1c50d2" stroke="#1c50d2" stroke-width="1.8" stroke-linejoin="round"/></svg>
</article>
<article class="b" style="left:1988.2px;top:1694.6px;width:854.6000000000001px;height:200px;background:#fff;border-radius:40px;"></article>
</aside>
</main>
<header class="global">
<div class="b banner" style="left:167px;top:0px;width:2713px;height:105px;background:#2a6df5;"></div>
<span class="t" style="right:369px;top:34.9632px;font-size:28.4px;line-height:40px;color:#fff;letter-spacing:0.22px;">Pro Suite トライアルの残り日数:</span>
<div class="b" style="left:2520px;top:27px;width:72px;height:53px;background:#fafcc5;border-radius:9px;"></div>
<span class="t" style="left:2556px;transform:translateX(-50%);top:35.568px;font-size:28.5px;line-height:40px;color:#000;">30</span>
<a class="b" style="left:2627px;top:18px;width:218px;height:70px;background:#fff;border-radius:35px;"></a>
<span class="t" style="left:2736px;transform:translateX(-50%);top:34.1632px;font-size:28.4px;line-height:40px;color:#1c50d2;font-weight:700;">今すぐ購入</span>
<div class="b" style="left:167px;top:105px;width:2713px;height:110px;background:#fff;"></div>
<div class="b" style="left:167px;top:214.6px;width:2713px;height:1.4px;background:#efefef;"></div>
<svg class="i" style="left:202px;top:124px;" width="102" height="72" viewBox="0 0 102 72"><g fill="#45a1db"><circle cx="25.5" cy="19.6" r="18.8"/><circle cx="54.6" cy="20.4" r="17.2"/><circle cx="79" cy="32.2" r="22.1"/><circle cx="17.7" cy="42.6" r="17.6"/><circle cx="37.4" cy="51.8" r="19.2"/><circle cx="60.6" cy="44" r="17.9"/><rect x="28" y="18" width="48" height="34"/></g></svg>
<div class="b search" style="left:1044.4px;top:125.2px;width:879.4px;height:69.6px;background:#fff;border-radius:35px;border:2.4px solid #5c5c5c;box-sizing:border-box;"></div>
<svg class="i" style="left:1080px;top:147px;" width="34" height="34" viewBox="0 0 34 34"><circle cx="13.4" cy="13.4" r="9.3" fill="none" stroke="#747474" stroke-width="4"/><path d="M20.4 20.4 L28.8 29" stroke="#747474" stroke-width="4.2" stroke-linecap="round"/></svg>
<span class="t" style="left:1130px;top:141.754px;font-size:28.2px;line-height:40px;color:#747474;">検索...</span>
<div class="b" style="left:2342.8px;top:137.8px;width:44.4px;height:44.4px;background:#5c5c5c;border-radius:50%;"></div>
<svg class="i" style="left:2343px;top:138px;" width="44" height="44" viewBox="0 0 44 44"><path d="M22 7 V37 M7 22 H37" stroke="#fff" stroke-width="4.2"/></svg>
<svg class="i" style="left:2428.2px;top:139.4px;" width="42" height="42" viewBox="0 0 42 42"><path d="M21 0.6 C27.5 3.6 38 12 41 26 C41.6 29 41.4 31.6 41 34 C35 38.6 28 41 21 41 C14 41 7 38.6 1 34 C0.6 31.6 0.4 29 1 26 C4 12 14.5 3.6 21 0.6 Z" fill="#5c5c5c"/><path d="M-1 27.6 H43" stroke="#fff" stroke-width="3.6"/><path d="M7.4 26.6 L17.4 12.6 L22 19 L25.6 15.6 L33.6 26.6" fill="none" stroke="#fff" stroke-width="3.4" stroke-linejoin="round"/><path d="M22.6 18.6 L20.2 26.6" fill="none" stroke="#fff" stroke-width="3"/><path d="M20.4 29 C18.6 33.4 24.6 34.6 22.4 41.4" fill="none" stroke="#fff" stroke-width="3.4"/></svg>
<svg class="i" style="left:2514.6px;top:140.4px;" width="27.8" height="40.4" viewBox="0 0 29 42"><path d="M3.2 14 C3.2 7.4 8 3.2 14.2 3.2 C20.4 3.2 25 7.4 25 13 C25 18 22.4 20.6 18.6 22.8 C15.6 24.6 14.4 26.4 14.4 30" fill="none" stroke="#5c5c5c" stroke-width="6.8" stroke-linecap="butt"/><rect x="10.8" y="34.6" width="7.2" height="6.6" rx="1.6" fill="#5c5c5c"/></svg>
<svg class="i" style="left:2588.6px;top:140.2px;" width="36.8" height="40.6" viewBox="0 0 38 42"><g transform="translate(19 20.6)" fill="#5c5c5c"><circle r="14.4"/><rect x="-4.6" y="-20.4" width="9.2" height="9" rx="2.6" transform="rotate(0)"/><rect x="-4.6" y="-20.4" width="9.2" height="9" rx="2.6" transform="rotate(60)"/><rect x="-4.6" y="-20.4" width="9.2" height="9" rx="2.6" transform="rotate(120)"/><rect x="-4.6" y="-20.4" width="9.2" height="9" rx="2.6" transform="rotate(180)"/><rect x="-4.6" y="-20.4" width="9.2" height="9" rx="2.6" transform="rotate(240)"/><rect x="-4.6" y="-20.4" width="9.2" height="9" rx="2.6" transform="rotate(300)"/></g><circle cx="19" cy="20.6" r="9.2" fill="#fff"/><path d="M21.4 14.4 L15.2 14.4 L13.8 21.4 H17.4 L15.8 27.6 L23.6 18.8 H19.8 Z" fill="#5c5c5c"/></svg>
<svg class="i" style="left:2665.6px;top:140.2px;" width="41" height="41" viewBox="0 0 41 41"><path d="M0.6 28.2 C0.6 26.2 2 25 3.8 25 C6 25 7 23.6 7 21.4 V14.4 C7 5.6 12.6 0.6 20.4 0.6 C28.2 0.6 33.8 5.6 33.8 14.4 V21.4 C33.8 23.6 34.8 25 37 25 C38.8 25 40.2 26.2 40.2 28.2 V29.4 C40.2 30.8 39.4 31.6 38 31.6 H2.8 C1.4 31.6 0.6 30.8 0.6 29.4 Z" fill="#5c5c5c"/><path d="M15.6 35 H25.2 C25.2 37.8 23.2 39.8 20.4 39.8 C17.6 39.8 15.6 37.8 15.6 35 Z" fill="#5c5c5c"/></svg>
<div class="b" style="left:2682.0px;top:120.80000000000001px;width:35.2px;height:35.2px;background:#c5281c;border-radius:50%;"></div>
<span class="t" style="left:2699.4px;transform:translateX(-50%);top:121.248px;font-size:26px;line-height:36px;color:#fff;font-weight:700;">1</span>
<svg class="i" style="left:2755.2px;top:117.8px;" width="74" height="74" viewBox="0 0 74 74"><defs><clipPath id="avc"><circle cx="37" cy="37" r="35.4"/></clipPath></defs><circle cx="37" cy="37" r="35.9" fill="#eceef4" stroke="#8c8c8c" stroke-width="2.2"/><g clip-path="url(#avc)"><g transform="translate(37 38) scale(1.07) translate(-37 -38)"><path d="M15.5 14 C17 11 20 11.4 23 13.6 C31 9.6 43 9.6 51 13.6 C54 11.4 57 11 58.5 14 C60 18 59.4 22 58.6 25 C63 31 64.5 39 62 45.6 C60 51 56 55.6 50.6 57.6 C55 59.6 58.6 63 60 68 L62 76 H12 L14 68 C15.4 63 19 59.6 23.4 57.6 C18 55.6 14 51 12 45.6 C9.5 39 11 31 15.4 25 C14.6 22 14 18 15.5 14 Z" fill="#a8b6d2"/><path d="M17.4 15.6 C18.6 14.4 20.4 15.4 22.4 17.6 C23.6 19.6 22.4 22.4 20.4 24 C19 25 17.6 24.4 17.2 22.6 C16.6 20 16.6 17 17.4 15.6 Z" fill="#5a6e93"/><path d="M56.6 15.6 C55.4 14.4 53.6 15.4 51.6 17.6 C50.4 19.6 51.6 22.4 53.6 24 C55 25 56.4 24.4 56.8 22.6 C57.4 20 57.4 17 56.6 15.6 Z" fill="#5a6e93"/><ellipse cx="37" cy="43.4" rx="19.6" ry="17.6" fill="#5a6e93"/><path d="M20.4 46 C20.4 38 26 33.6 33 32.4 C35 33.6 37 34.4 39.4 34.6 C38.4 33.6 37.6 32.6 37 31.6 C46 31.6 54 37 54 46 C54 54 46.6 60 37.2 60 C27.8 60 20.4 54 20.4 46 Z" fill="#fff"/><ellipse cx="28" cy="47.2" rx="1.8" ry="2.8" fill="#5a6e93"/><ellipse cx="46" cy="47.2" rx="1.8" ry="2.8" fill="#5a6e93"/><path d="M28.6 72 C29.4 67.6 32.6 65.2 37 65.2 C41.4 65.2 44.6 67.6 45.4 72 Z" fill="#5a6e93"/></g></g></svg>
</header>
<nav class="appnav">
<div class="b" style="left:167px;top:216px;width:2713px;height:87.6px;background:#fff;box-shadow:0 4px 10px rgba(0,0,0,0.10);"></div>
<span class="t" style="left:203.6px;top:224.277px;font-size:51.6px;line-height:72px;color:#03234d;">セールス</span>
<a class="t" style="left:489.4px;top:240.573px;font-size:28.6px;line-height:40px;color:#03234d;">リード</a>
<svg class="i" style="left:599.9px;top:251.3px;" width="32.2" height="21.4" viewBox="0 0 32.2 21.4"><path d="M4.365 4.365 L16.1 16.45 L27.835 4.365" fill="none" stroke="#5c5c5c" stroke-width="3.9" stroke-linecap="butt" stroke-linejoin="miter"/></svg>
<a class="t" style="left:693px;top:240.573px;font-size:28.6px;line-height:40px;color:#03234d;">取引先責任者</a>
<svg class="i" style="left:890.5px;top:251.3px;" width="32.2" height="21.4" viewBox="0 0 32.2 21.4"><path d="M4.365 4.365 L16.1 16.45 L27.835 4.365" fill="none" stroke="#5c5c5c" stroke-width="3.9" stroke-linecap="butt" stroke-linejoin="miter"/></svg>
<a class="t" style="left:983px;top:240.573px;font-size:28.6px;line-height:40px;color:#1c50d2;">取引先</a>
<svg class="i" style="left:1094.9px;top:251.3px;" width="32.2" height="21.4" viewBox="0 0 32.2 21.4"><path d="M4.365 4.365 L16.1 16.45 L27.835 4.365" fill="none" stroke="#1c50d2" stroke-width="3.9" stroke-linecap="butt" stroke-linejoin="miter"/></svg>
<a class="t" style="left:1188px;top:240.573px;font-size:28.6px;line-height:40px;color:#03234d;">商談</a>
<svg class="i" style="left:1270.9px;top:251.3px;" width="32.2" height="21.4" viewBox="0 0 32.2 21.4"><path d="M4.365 4.365 L16.1 16.45 L27.835 4.365" fill="none" stroke="#5c5c5c" stroke-width="3.9" stroke-linecap="butt" stroke-linejoin="miter"/></svg>
<a class="t" style="left:1364px;top:240.573px;font-size:28.6px;line-height:40px;color:#03234d;">売上予測</a>
<a class="t" style="left:1540.4px;top:240.573px;font-size:28.6px;line-height:40px;color:#03234d;">見積</a>
<svg class="i" style="left:1623.3000000000002px;top:251.3px;" width="32.2" height="21.4" viewBox="0 0 32.2 21.4"><path d="M4.365 4.365 L16.1 16.45 L27.835 4.365" fill="none" stroke="#5c5c5c" stroke-width="3.9" stroke-linecap="butt" stroke-linejoin="miter"/></svg>
<a class="t" style="left:1716px;top:240.573px;font-size:28.6px;line-height:40px;color:#03234d;">商品</a>
<svg class="i" style="left:1799.3000000000002px;top:251.3px;" width="32.2" height="21.4" viewBox="0 0 32.2 21.4"><path d="M4.365 4.365 L16.1 16.45 L27.835 4.365" fill="none" stroke="#5c5c5c" stroke-width="3.9" stroke-linecap="butt" stroke-linejoin="miter"/></svg>
<a class="t" style="left:1891.6px;top:240.573px;font-size:28.6px;line-height:40px;color:#03234d;">価格表</a>
<svg class="i" style="left:2002.9px;top:251.3px;" width="32.2" height="21.4" viewBox="0 0 32.2 21.4"><path d="M4.365 4.365 L16.1 16.45 L27.835 4.365" fill="none" stroke="#5c5c5c" stroke-width="3.9" stroke-linecap="butt" stroke-linejoin="miter"/></svg>
<a class="t" style="left:2094.6px;top:240.573px;font-size:28.6px;line-height:40px;color:#03234d;letter-spacing:-0.7px;">カレンダー</a>
<svg class="i" style="left:2260.9px;top:251.3px;" width="32.2" height="21.4" viewBox="0 0 32.2 21.4"><path d="M4.365 4.365 L16.1 16.45 L27.835 4.365" fill="none" stroke="#5c5c5c" stroke-width="3.9" stroke-linecap="butt" stroke-linejoin="miter"/></svg>
<a class="t" style="left:2354px;top:240.573px;font-size:28.6px;line-height:40px;color:#03234d;">分析</a>
<div class="b" style="left:957.4px;top:294.8px;width:195.4px;height:6.2px;background:#1b4fd0;border-radius:3.1px;"></div>
<svg class="i" style="left:2812.6px;top:248.8px;" width="29.4" height="29.4" viewBox="0 0 29 29"><g fill="#1c50d2" transform="rotate(45 14.5 14.5)"><rect x="10.4" y="-1.6" width="8.4" height="4.6" rx="1.4"/><rect x="10.4" y="4.6" width="8.4" height="18.6"/><path d="M10.4 24.8 H18.8 L17 31.6 L14.6 32.6 L12.2 31.6 Z"/></g></svg>
</nav>
<aside class="sidebar">
<div class="b" style="left:0px;top:0px;width:167px;height:1800px;background:#04143f;"></div>
<div class="b" style="left:13px;top:458px;width:141px;height:140px;border-radius:28px;border:4px solid #fff;box-sizing:border-box;"></div>
<a class="sb-item">
<div class="b" style="left:47.6px;top:22px;width:71.2px;height:70.4px;background:#031637;border-radius:11px;"></div>
<svg class="i" style="left:47.6px;top:21.5px;" width="72" height="72" viewBox="0 0 72 72"><path d="M13 34 L35.8 14.4 L58.4 34" fill="none" stroke="#fff" stroke-width="4.2" stroke-linejoin="round" stroke-linecap="round" stroke-width="4.4"/><path d="M19 29.5 V57.8 H52.4 V29.5" fill="none" stroke="#fff" stroke-width="4.2" stroke-linejoin="round" stroke-linecap="round" stroke-linecap="butt" stroke-linejoin="miter"/></svg>
<span class="t" style="left:83.5px;transform:translateX(-50%);top:101.656px;font-size:22px;line-height:32px;color:#ffffff;">ホーム</span>
</a>
<a class="sb-item">
<div class="b" style="left:47.6px;top:171.4px;width:71.2px;height:70.4px;background:#031637;border-radius:11px;"></div>
<svg class="i" style="left:47.6px;top:170.9px;" width="72" height="72" viewBox="0 0 72 72"><g fill="#fff"><ellipse cx="23.4" cy="24.2" rx="6.6" ry="7.4"/><path d="M11.6 43.2 C11.6 38 16 36.6 19.6 34.6 C21 33.8 21.4 32 20.4 30.4 L27 29 L33 46 H14 C12.4 46 11.6 44.8 11.6 43.2 Z"/><g transform="translate(71.6 0) scale(-1 1)"><ellipse cx="23.4" cy="24.2" rx="6.6" ry="7.4"/><path d="M11.6 43.2 C11.6 38 16 36.6 19.6 34.6 C21 33.8 21.4 32 20.4 30.4 L27 29 L33 46 H14 C12.4 46 11.6 44.8 11.6 43.2 Z"/></g></g><g fill="#fff" stroke="#031637" stroke-width="5" paint-order="stroke"><path d="M22.4 49.4 C22.4 44.4 27 43 30.8 40.8 C32.4 39.8 32.6 38.2 31.4 36.6 C29.6 34.2 28.4 32 28.4 28.6 C28.4 23.8 31.6 21.4 35.8 21.4 C40 21.4 43.2 23.8 43.2 28.6 C43.2 32 42 34.2 40.2 36.6 C39 38.2 39.2 39.8 40.8 40.8 C44.6 43 49.2 44.4 49.2 49.4 C49.2 51.6 48 52.8 46 52.8 H25.6 C23.6 52.8 22.4 51.6 22.4 49.4 Z"/></g></svg>
<span class="t" style="left:21.2px;top:251.056px;font-size:22px;line-height:32px;color:#ffffff;">取引先責...</span>
</a>
<a class="sb-item">
<div class="b" style="left:47.6px;top:321px;width:71.2px;height:70.4px;background:#031637;border-radius:11px;"></div>
<svg class="i" style="left:47.6px;top:320.8px;" width="72" height="72" viewBox="0 0 72 72"><g transform="translate(-0.5 0.4)"><g fill="#fff"><rect x="14.8" y="14.4" width="19.4" height="41.2" rx="1.6"/><rect x="37.6" y="23.4" width="19.4" height="32.2" rx="1.6"/></g><g fill="#031637"><rect x="18.6" y="20.4" width="4.2" height="5"/><rect x="18.6" y="30" width="4.2" height="5"/><rect x="18.6" y="39.4" width="4.2" height="5"/><rect x="26.4" y="20.4" width="4.2" height="5"/><rect x="26.4" y="30" width="4.2" height="5"/><rect x="26.4" y="39.4" width="4.2" height="5"/><rect x="20.6" y="48.4" width="7.8" height="8"/><rect x="41.6" y="30" width="4.2" height="5"/><rect x="41.6" y="39.4" width="4.2" height="5"/><rect x="49.4" y="30" width="4.2" height="5"/><rect x="49.4" y="39.4" width="4.2" height="5"/><rect x="43.4" y="48.4" width="7.8" height="8"/></g></g></svg>
<span class="t" style="left:83.5px;transform:translateX(-50%);top:400.656px;font-size:22px;line-height:32px;color:#ffffff;">取引先</span>
</a>
<a class="sb-item">
<div class="b" style="left:47.6px;top:470.4px;width:71.2px;height:70.4px;background:#031637;border-radius:11px;"></div>
<svg class="i" style="left:47.6px;top:469.9px;" width="72" height="72" viewBox="0 0 72 72"><rect x="13.3" y="13.2" width="44.8" height="44.8" rx="1" fill="none" stroke="#fff" stroke-width="4.2" stroke-linejoin="round" stroke-linecap="round" stroke-linejoin="miter"/><path d="M14.6 41.6 L23.8 32.4 L31.8 39.6 L46.4 24.8" fill="none" stroke="#fff" stroke-width="4.2" stroke-linejoin="round" stroke-linecap="round" stroke-linecap="butt" stroke-linejoin="miter"/><path d="M34 24.4 H47.2 V37" fill="none" stroke="#fff" stroke-width="4.2" stroke-linejoin="round" stroke-linecap="round"/><path d="M24.2 50.6 V56 M35.8 50.6 V56 M47.4 50.6 V56" fill="none" stroke="#fff" stroke-width="4.2" stroke-linejoin="round" stroke-linecap="round"/></svg>
<span class="t" style="left:83.5px;transform:translateX(-50%);top:550.056px;font-size:22px;line-height:32px;color:#ffffff;">セールス</span>
</a>
<a class="sb-item">
<div class="b" style="left:47.6px;top:619.8px;width:71.2px;height:70.4px;background:#031637;border-radius:11px;"></div>
<svg class="i" style="left:47.6px;top:620.0999999999999px;" width="72" height="72" viewBox="0 0 72 72"><path d="M35.8 24.6 C32.4 19.2 28 16.6 23.4 16.6 C17.6 16.6 13.4 21.2 13.4 26.6 C13.4 31 15.6 34 18.4 36.8 L35.8 53.8 L53.2 36.8 C56 34 58.2 31 58.2 26.6 C58.2 21.2 54 16.6 48.2 16.6 C43.6 16.6 39.2 19.2 35.8 24.6 Z" fill="none" stroke="#fff" stroke-width="4.2" stroke-linejoin="round" stroke-linecap="round" stroke-width="4"/><path d="M19.4 28.2 C19.4 25.2 21.4 23 24.2 22.6" fill="none" stroke="#fff" stroke-width="4.2" stroke-linejoin="round" stroke-linecap="round" stroke-width="3.2"/></svg>
<span class="t" style="left:83.5px;transform:translateX(-50%);top:699.456px;font-size:22px;line-height:32px;color:#ffffff;">サービス</span>
</a>
<a class="sb-item">
<div class="b" style="left:47.6px;top:770px;width:71.2px;height:70.4px;background:#031637;border-radius:11px;"></div>
<svg class="i" style="left:47.6px;top:769.5px;" width="72" height="72" viewBox="0 0 72 72"><rect x="13.3" y="19.2" width="45.2" height="31.8" rx="0.6" fill="none" stroke="#fff" stroke-width="4.2" stroke-linejoin="round" stroke-linecap="round" stroke-linejoin="miter"/><path d="M14 21 L35.8 37.6 L57.6 21" fill="none" stroke="#fff" stroke-width="4.2" stroke-linejoin="round" stroke-linecap="round" stroke-width="3.6" stroke-linejoin="miter" stroke-linecap="butt"/><path d="M14 49.6 L27 36 M57.6 49.6 L44.6 36" fill="none" stroke="#fff" stroke-width="4.2" stroke-linejoin="round" stroke-linecap="round" stroke-width="3.6" stroke-linecap="butt"/></svg>
<span class="t" style="left:20.8px;top:849.656px;font-size:22px;line-height:32px;color:#ffffff;">アウトリ...</span>
</a>
<a class="sb-item">
<div class="b" style="left:47.6px;top:918.8px;width:71.2px;height:70.4px;background:#031637;border-radius:11px;"></div>
<svg class="i" style="left:47.6px;top:918.3px;" width="72" height="72" viewBox="0 0 72 72"><path d="M13.4 16 H19.2 L26 47.4 H57" fill="none" stroke="#fff" stroke-width="4.2" stroke-linejoin="round" stroke-linecap="round"/><path d="M21.2 22.2 H58.2 L54 38.6 H24.6" fill="none" stroke="#fff" stroke-width="4.2" stroke-linejoin="round" stroke-linecap="round" stroke-linejoin="miter"/><circle cx="25.4" cy="52.4" r="3.7" fill="none" stroke="#fff" stroke-width="4.2" stroke-linejoin="round" stroke-linecap="round" stroke-width="3.6"/><circle cx="49.8" cy="52.4" r="3.7" fill="none" stroke="#fff" stroke-width="4.2" stroke-linejoin="round" stroke-linecap="round" stroke-width="3.6"/></svg>
<span class="t" style="left:83.5px;transform:translateX(-50%);top:998.456px;font-size:22px;line-height:32px;color:#ffffff;">コマース</span>
</a>
<a class="sb-item">
<div class="b" style="left:47.6px;top:1069px;width:71.2px;height:70.4px;background:#031637;border-radius:11px;"></div>
<svg class="i" style="left:47.6px;top:1068.5px;" width="72" height="72" viewBox="0 0 72 72"><rect x="13.2" y="13" width="34" height="42" rx="1.8" fill="#fff"/><g fill="#031637"><rect x="17.8" y="18.3" width="5.6" height="5.4" rx="1.6"/><rect x="27.5" y="18.3" width="5.6" height="5.4" rx="1.6"/><rect x="37.400000000000006" y="18.3" width="5.6" height="5.4" rx="1.6"/><rect x="17.8" y="27.2" width="5.6" height="5.4" rx="1.6"/><rect x="27.5" y="27.2" width="5.6" height="5.4" rx="1.6"/><rect x="37.400000000000006" y="27.2" width="5.6" height="5.4" rx="1.6"/><rect x="17.8" y="36.099999999999994" width="5.6" height="5.4" rx="1.6"/><rect x="27.5" y="36.099999999999994" width="5.6" height="5.4" rx="1.6"/><rect x="37.400000000000006" y="36.099999999999994" width="5.6" height="5.4" rx="1.6"/><rect x="17.8" y="45.099999999999994" width="5.6" height="5.4" rx="1.6"/><rect x="27.5" y="45.099999999999994" width="5.6" height="5.4" rx="1.6"/></g><path d="M36 36.8 L42 37.2 L43.4 40 H60 L57.6 53 L57 58.6 H44 L42.8 53.6 L40.4 42 L36 40.6 Z" fill="#031637"/><path d="M37.4 38.6 C39.8 38.2 41.2 39 41.8 41 L44.8 52 H56" fill="none" stroke="#fff" stroke-width="2.4" stroke-linecap="round" stroke-linejoin="round"/><path d="M42.6 41.8 H58.4 L56.6 48.6 H44.4 Z" fill="#fff"/><circle cx="45.8" cy="55.8" r="1.7" fill="#fff"/><circle cx="54.4" cy="55.8" r="1.7" fill="#fff"/></svg>
<span class="t" style="left:21.6px;top:1148.66px;font-size:22px;line-height:32px;color:#ffffff;letter-spacing:0.62px;">Your Acc...</span>
</a>
<a class="sb-item">
<div class="b" style="left:57px;top:1241.4px;width:52.6px;height:52.4px;background:#031637;border-radius:9px;"></div>
<svg class="i" style="left:57px;top:1241.4px;" width="53" height="53" viewBox="0 0 53 53"><circle cx="13.8" cy="26.1" r="4.4" fill="#fff"/><circle cx="26.4" cy="26.1" r="4.4" fill="#fff"/><circle cx="39.2" cy="26.1" r="4.4" fill="#fff"/></svg>
<span class="t" style="left:84.4px;transform:translateX(-50%);top:1302.06px;font-size:22px;line-height:32px;color:#ffffff;">さらに表示</span>
</a>
</aside>
<footer class="utility-bar">
<div class="b" style="left:167px;top:1711.6px;width:2713px;height:90px;background:#fff;box-shadow:0 -2px 6px rgba(0,0,0,0.22);"></div>
<svg class="i" style="left:195.2px;top:1747.5px;" width="29" height="25" viewBox="0 0 29 25"><g fill="#5c5c5c"><rect x="14.9" y="3.8" width="13.4" height="3.4" rx="0.7"/><rect x="11.9" y="12.4" width="16.4" height="3.4" rx="0.7"/><rect x="11.9" y="20.9" width="16.4" height="3.4" rx="0.7"/><rect x="3.5" y="12.4" width="4" height="3.4" rx="1"/><rect x="3.5" y="20.9" width="4" height="3.4" rx="1"/></g><path d="M1 4.9 L4.6 8.3 L12 0.9" fill="none" stroke="#5c5c5c" stroke-width="3"/></svg>
<span class="t" style="left:243.4px;top:1736.79px;font-size:29px;line-height:42px;color:#5c5c5c;font-weight:700;letter-spacing:-0.7px;">To Do List</span>
</footer>
</body>
</html>
